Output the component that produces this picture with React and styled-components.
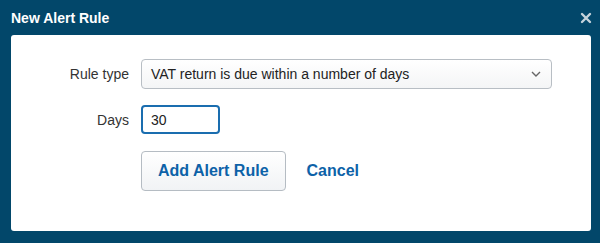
import React from 'react'
import styled, { createGlobalStyle } from 'styled-components'

const GlobalStyle = createGlobalStyle`
  html, body {
    margin: 0;
    padding: 0;
    background: #02476a;
  }
  body {
    font-family: "Liberation Sans", Arial, sans-serif;
  }
`

const Dialog = styled.div`
  width: 600px;
  height: 243px;
  box-sizing: border-box;
  background: #02476a;
  display: flex;
  flex-direction: column;
  padding: 0 9px 12px 11px;
`

const Header = styled.div`
  height: 35px;
  display: flex;
  align-items: center;
  justify-content: space-between;
`

const Title = styled.h1`
  margin: 0;
  padding-top: 1px;
  font-size: 14px;
  font-weight: 700;
  color: #fff;
`

const Close = styled.button`
  border: 0;
  background: none;
  padding: 0;
  margin-right: -1px;
  margin-top: 1px;
  width: 12px;
  height: 12px;
  display: flex;
  cursor: pointer;
`

const Panel = styled.div`
  flex: 1;
  background: #fff;
  border-radius: 3px;
  padding: 24px 39px 0 0;
  display: grid;
  grid-template-columns: 118px 1fr;
  column-gap: 12px;
  row-gap: 16px;
  align-content: start;
`

const Label = styled.label`
  justify-self: end;
  align-self: center;
  font-size: 14px;
  color: #333;
`

const SelectBox = styled.div`
  height: 30px;
  box-sizing: border-box;
  border: 1px solid #b8bec4;
  border-radius: 4px;
  background: linear-gradient(#ffffff, #f4f5f6);
  display: flex;
  align-items: center;
  justify-content: space-between;
  padding: 0 10px 0 9px;
  font-size: 14px;
  color: #222;
`

const TextInput = styled.input`
  width: 79px;
  height: 29px;
  box-sizing: border-box;
  border: 2px solid #1a6daf;
  border-radius: 4px;
  padding: 0 8px;
  font-family: inherit;
  font-size: 14px;
  color: #222;
  caret-color: #222;
  outline: none;
`

const Actions = styled.div`
  grid-column: 2;
  display: flex;
  align-items: center;
  gap: 21px;
  margin-top: 1px;
`

const PrimaryButton = styled.button`
  height: 40px;
  padding: 0 16px;
  border: 1px solid #b5bcc3;
  border-radius: 4px;
  background: linear-gradient(#ffffff, #f1f3f5);
  font-family: inherit;
  font-size: 16px;
  font-weight: 700;
  color: #0d62a8;
  cursor: pointer;
`

const LinkButton = styled.a`
  font-size: 16px;
  font-weight: 700;
  color: #0d62a8;
  text-decoration: none;
  cursor: pointer;
`

const App = () => (
  <Dialog>
    <GlobalStyle />
    <Header>
      <Title>New Alert Rule</Title>
      <Close aria-label="Close">
        <svg width="12" height="12" viewBox="0 0 12 12">
          <path d="M2 2 L10 10 M10 2 L2 10" stroke="#c5d3dc" strokeWidth="2.4" strokeLinecap="round" />
        </svg>
      </Close>
    </Header>
    <Panel>
      <Label>Rule type</Label>
      <SelectBox>
        <span>VAT return is due within a number of days</span>
        <svg width="10" height="6" viewBox="0 0 10 6">
          <path d="M1 1 L5 5 L9 1" fill="none" stroke="#666" strokeWidth="1.4" />
        </svg>
      </SelectBox>
      <Label>Days</Label>
      <TextInput defaultValue="30" autoFocus />
      <Actions>
        <PrimaryButton>Add Alert Rule</PrimaryButton>
        <LinkButton>Cancel</LinkButton>
      </Actions>
    </Panel>
  </Dialog>
)

export default App
